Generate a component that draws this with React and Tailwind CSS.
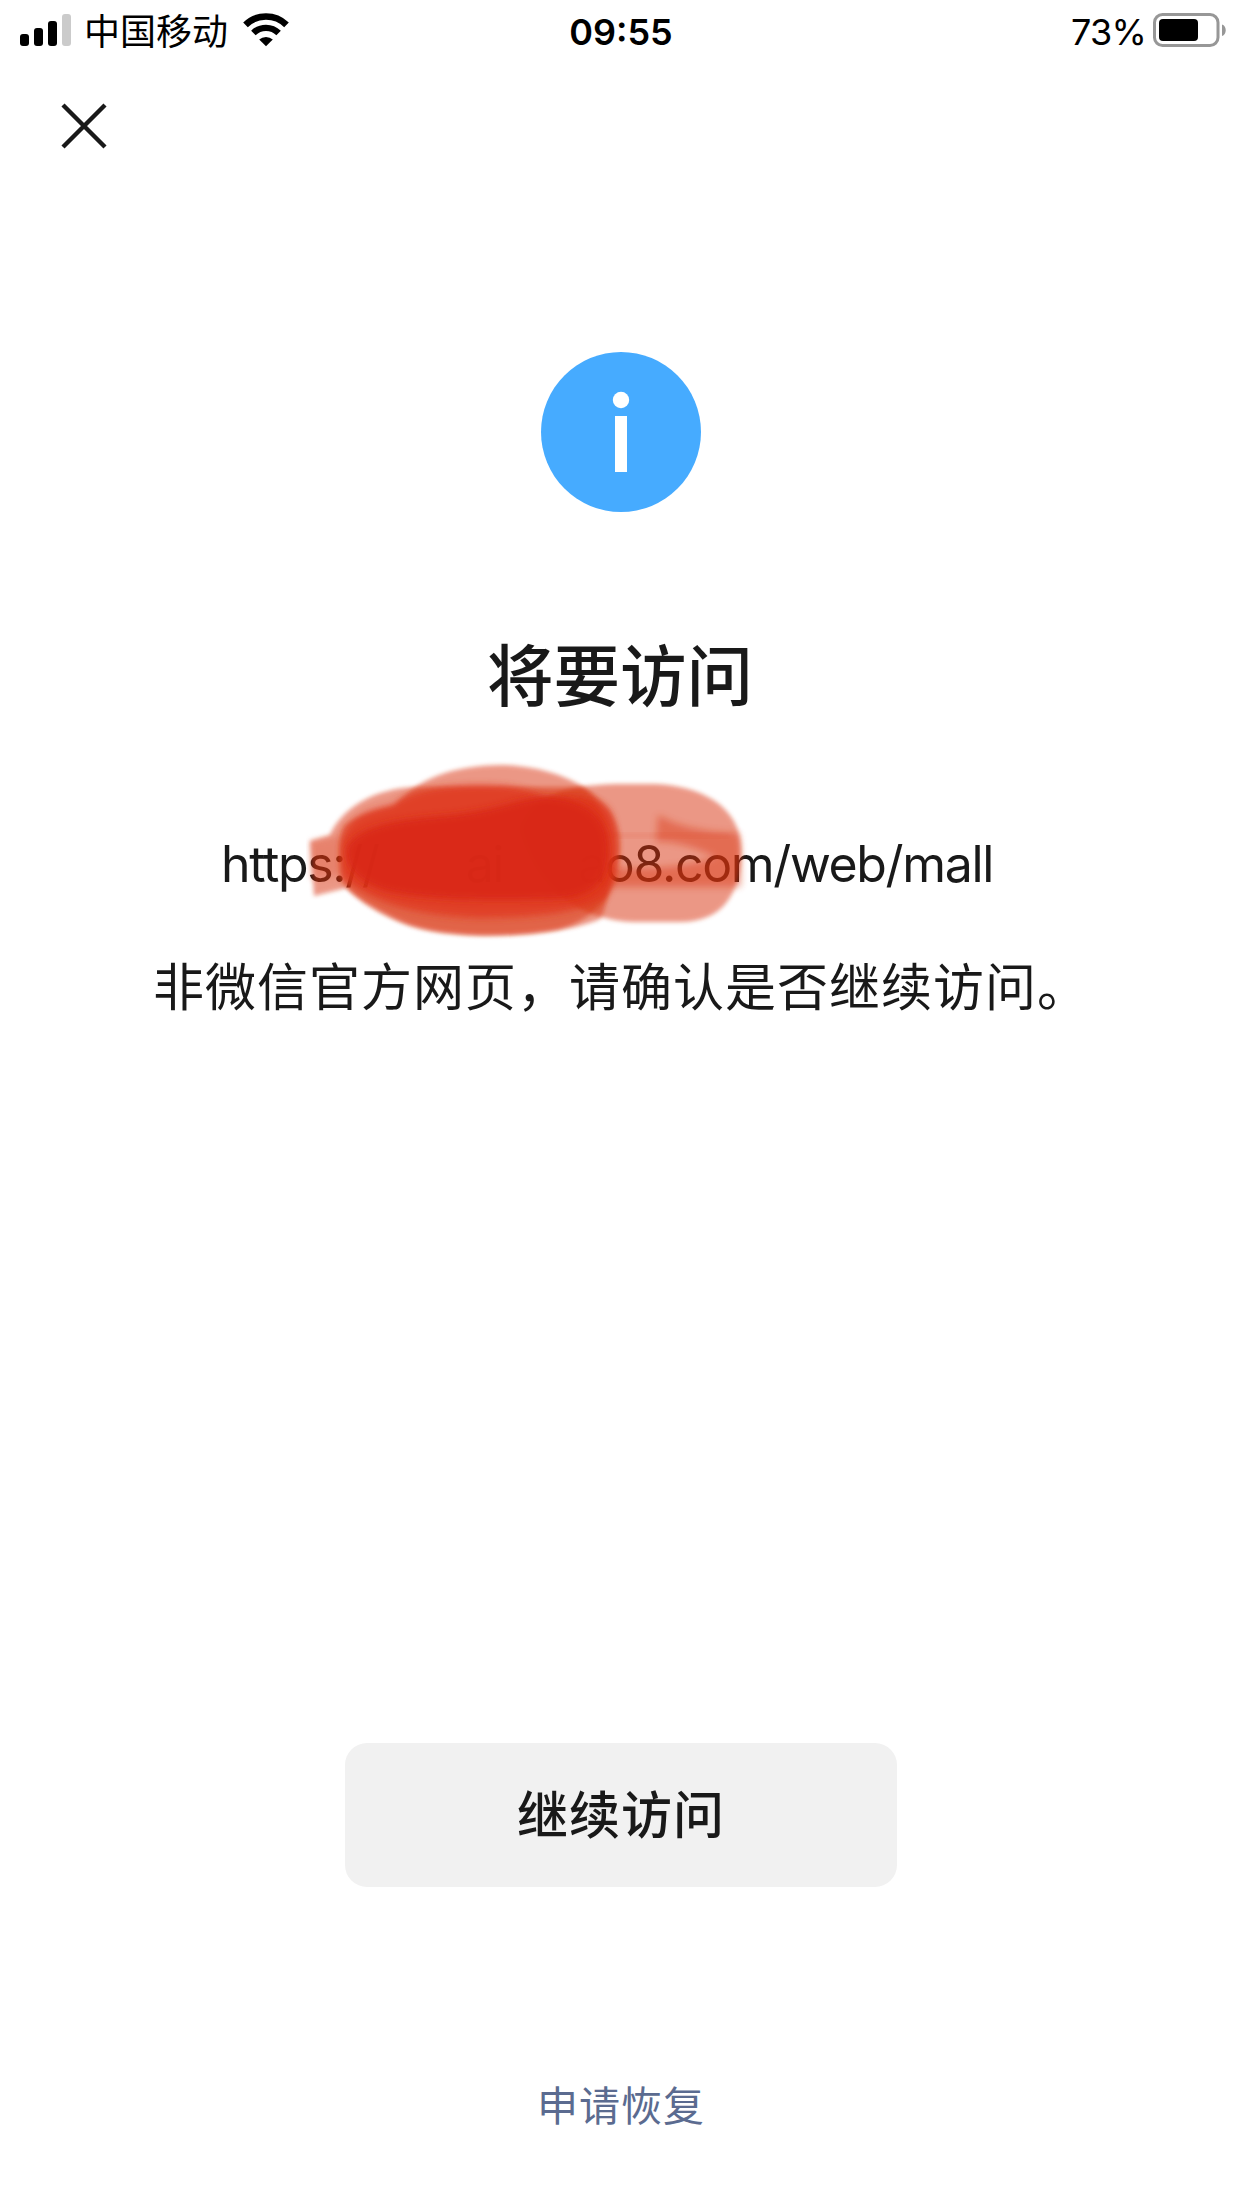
import React from 'react';

const BARS = [
  { x: 0, h: 12, color: '#000' },
  { x: 14, h: 18, color: '#000' },
  { x: 28, h: 25, color: '#000' },
  { x: 42, h: 32, color: '#cbcbcb' },
];

function SignalIcon() {
  return (
    <svg width="51" height="32" viewBox="0 0 51 32">
      {BARS.map((b) => (
        <rect key={b.x} x={b.x} y={32 - b.h} width="9" height={b.h} rx="3" fill={b.color} />
      ))}
    </svg>
  );
}

function WifiIcon() {
  return (
    <svg width="46" height="34" viewBox="0 0 46 34" fill="none">
      <path d="M2.5 11.8A29.4 29.4 0 0 1 43.5 11.8" stroke="#000" strokeWidth="6.6" />
      <path d="M10.4 20A18 18 0 0 1 35.6 20" stroke="#000" strokeWidth="6.4" />
      <path d="M16.2 26.6A10 10 0 0 1 29.8 26.6L23 33.3Z" fill="#000" />
    </svg>
  );
}

function BatteryIcon() {
  return (
    <svg width="74" height="34" viewBox="0 0 74 34">
      <rect x="1.5" y="1.5" width="63.5" height="31" rx="8" fill="none" stroke="#979797" strokeWidth="3" />
      <rect x="6" y="6" width="39" height="22" rx="4" fill="#000" />
      <path d="M69 11.5C74 13 74 21.5 69 23Z" fill="#979797" />
    </svg>
  );
}

function StatusBar() {
  return (
    <header className="grid h-[60px] grid-cols-3 items-center pl-5 pr-[15px] text-black">
      <div className="flex items-center">
        <SignalIcon />
        <span className="ml-[13px] whitespace-nowrap pb-[2px] font-['Noto_Sans_CJK_SC',sans-serif] text-[36px] leading-[54px]">
          中国移动
        </span>
        <span className="ml-[15px]">
          <WifiIcon />
        </span>
      </div>
      <span className="pr-[5px] pt-[3px] text-center text-[36px] font-semibold leading-[50px]">09:55</span>
      <div className="flex items-center justify-end">
        <span className="mr-[7px] pt-[3px] text-[36px] leading-[50px] tracking-[-0.8px]">73%</span>
        <BatteryIcon />
      </div>
    </header>
  );
}

// Red marker strokes painted over the address
function Scribble() {
  return (
    <svg
      className="pointer-events-none absolute left-[79px] top-[-75px]"
      width="460"
      height="200"
      viewBox="300 750 460 200"
    >
      <defs>
        <filter id="soft" x="-10%" y="-10%" width="120%" height="120%">
          <feGaussianBlur stdDeviation="2" />
        </filter>
        <filter id="softer" x="-10%" y="-20%" width="120%" height="140%">
          <feGaussianBlur stdDeviation="3.5" />
        </filter>
      </defs>
      <g fill="#d9300f">
        {/* right hand strokes */}
        <path
          d="M520 830C530 795 570 785 625 785H655C700 787 739 806 741 848C742 898 720 923 680 923H640C600 924 540 905 520 830Z"
          opacity="0.5"
          filter="url(#soft)"
        />
        <path
          d="M658 816C676 826 700 833 739 834L741 850V888H600V868C640 872 690 868 716 858C690 846 670 842 656 843Z"
          opacity="0.42"
          filter="url(#softer)"
        />
        <path d="M600 834H730V839H600Z" opacity="0.12" filter="url(#soft)" />

        {/* left tail and outer wash */}
        <path
          d="M310 842L330 836C340 812 372 788 420 788H580C615 800 615 900 600 920C560 938 450 944 405 925C375 914 358 900 346 889L314 897Z"
          opacity="0.5"
          filter="url(#soft)"
        />
        <path
          d="M396 806C415 782 450 766 503 766C570 768 620 802 620 845C620 890 600 918 560 930C520 938 450 940 405 924C370 908 350 895 342 882C338 860 338 835 345 826C360 815 380 812 396 806Z"
          opacity="0.5"
          filter="url(#soft)"
        />
        <path d="M310 842L345 836V876L310 880Z" opacity="0.2" filter="url(#softer)" />
      </g>

      {/* opaque core */}
      <path
        d="M342 850C342 826 356 812 392 806C410 792 440 786 480 786C515 786 530 790 548 800C580 794 600 798 610 812C620 830 620 875 606 898C580 914 540 918 480 919C420 917 370 905 342 878Z"
        fill="#e0361f"
        opacity="0.75"
        filter="url(#softer)"
      />
      <path
        d="M346 850C356 826 400 820 450 816C490 812 520 800 545 797C600 800 612 830 608 860C606 885 590 898 560 900C500 902 430 902 390 893C365 886 346 875 346 850Z"
        fill="#d92617"
        opacity="0.85"
        filter="url(#softer)"
      />
    </svg>
  );
}

export default function App() {
  return (
    <div className="flex h-[2208px] w-[1242px] flex-col bg-white font-['Inter','Noto_Sans_CJK_SC',sans-serif] text-[#191919]">
      <StatusBar />
      <button type="button" aria-label="关闭" className="ml-[61px] mt-[43px] self-start">
        <svg width="46" height="46" viewBox="0 0 46 46">
          <path d="M2 2L44 44M44 2L2 44" stroke="#191919" strokeWidth="4.4" />
        </svg>
      </button>

      <main className="flex flex-1 flex-col items-center">
        <svg className="mt-[203px]" width="160" height="160" viewBox="0 0 160 160">
          <circle cx="80" cy="80" r="80" fill="#46abff" />
          <circle cx="80" cy="48" r="8.2" fill="#fff" />
          <rect x="74" y="64" width="12" height="56" fill="#fff" />
        </svg>
        <h1 className="mr-[2px] mt-[117px] text-[66.5px] font-medium leading-[96px]">将要访问</h1>
        <div className="relative mr-[28px] mt-[99px] w-[772px]">
          <p className="flex justify-between whitespace-nowrap text-[50px] leading-[80px] tracking-[-1.35px]">
            <span>https://</span>
            <span className="ml-3">ai</span>
            <span>ao8.com/web/mall</span>
          </p>
          <Scribble />
        </div>
        <p className="mt-[46px] whitespace-nowrap text-[51px] leading-[76px] tracking-[1px]">
          非微信官方网页，请确认是否继续访问。
        </p>
        <button
          type="button"
          className="mt-[717px] h-[144px] w-[552px] rounded-[22px] bg-[#f1f1f1] pt-[2px] text-[51px] font-medium tracking-[1px]"
        >
          继续访问
        </button>
        <a className="mt-[189px] text-[41px] leading-[60px] tracking-[1px] text-[#5b6b90]">申请恢复</a>
      </main>
    </div>
  );
}
